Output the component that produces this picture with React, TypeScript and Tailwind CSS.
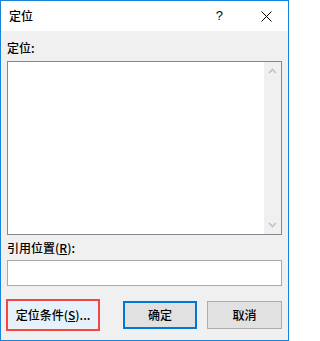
import React from "react";

const font = { fontFamily: '"Noto Sans CJK SC", "Noto Sans", sans-serif' };

export default function App() {
  return (
    <div
      className="w-[289px] h-[341px] border border-[#1883d7] flex flex-col bg-[#f0f0f0] text-[12px] font-medium text-black"
      style={font}
    >
      <div className="h-[30px] bg-white flex items-center pl-[8px] shrink-0">
        <span className="leading-[16px]">定位</span>
        <span className="ml-auto mr-[38px] text-[13px] font-normal leading-[16px]" style={{ fontFamily: '"Liberation Sans", sans-serif' }}>?</span>
        <svg width="11" height="11" viewBox="0 0 11 11" className="mr-[16px]">
          <path d="M0.5 0.5 L10.5 10.5 M10.5 0.5 L0.5 10.5" stroke="#000" strokeWidth="1" />
        </svg>
      </div>
      <div className="flex-1 flex flex-col px-[6px]">
        <div className="mt-[9px] leading-[16px] h-[16px]">定位:</div>
        <div className="mt-[5px] h-[174px] w-[275px] border border-[#828790] bg-white flex justify-end">
          <div className="w-[17px] h-full bg-[#f0f0f0] flex flex-col items-center justify-between py-[6px]">
            <svg width="9" height="6" viewBox="0 0 9 6">
              <path d="M1 5 L4.5 1.5 L8 5" stroke="#c1c1c1" strokeWidth="1.6" fill="none" />
            </svg>
            <svg width="9" height="6" viewBox="0 0 9 6">
              <path d="M1 1 L4.5 4.5 L8 1" stroke="#c1c1c1" strokeWidth="1.6" fill="none" />
            </svg>
          </div>
        </div>
        <div className="mt-[5px] leading-[16px] h-[16px]">
          引用位置(<span className="underline">R</span>):
        </div>
        <div className="mt-[4px] h-[26px] w-[275px] border border-[#a9a9a9] bg-white" />
        <div className="mt-[13px] flex items-start">
          <div className="ml-[-1px] w-[94px] h-[32px] border-[2px] border-[#f24545] p-px">
            <div className="w-full h-full bg-[#e5f1fb] flex items-center justify-center leading-[16px]">
              定位条件(<span className="underline">S</span>)...
            </div>
          </div>
          <div className="ml-[23px] mt-[2px] w-[74px] h-[28px] border-[2px] border-[#0078d7] bg-[#e1e1e1] flex items-center justify-center leading-[16px]">
            确定
          </div>
          <div className="ml-[10px] mt-[2px] w-[75px] h-[28px] border border-[#adadad] bg-[#e1e1e1] flex items-center justify-center leading-[16px]">
            取消
          </div>
        </div>
      </div>
    </div>
  );
}
